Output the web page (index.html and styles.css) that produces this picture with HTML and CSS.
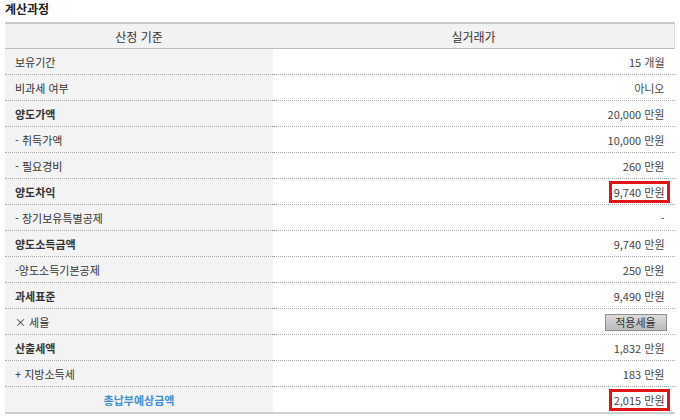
FILE: index.html
```html
<!DOCTYPE html>
<html lang="ko">
<head>
<meta charset="utf-8">
<link rel="stylesheet" href="styles.css">
</head>
<body>
<div class="title">계산과정</div>
<table class="calc">
  <thead>
    <tr><th class="col-l">산정 기준</th><th class="col-r">실거래가</th></tr>
  </thead>
  <tbody>
    <tr><td class="lbl">보유기간</td><td class="val">15 개월</td></tr>
    <tr><td class="lbl">비과세 여부</td><td class="val">아니오</td></tr>
    <tr><td class="lbl b">양도가액</td><td class="val">20,000 만원</td></tr>
    <tr><td class="lbl">- 취득가액</td><td class="val">10,000 만원</td></tr>
    <tr><td class="lbl">- 필요경비</td><td class="val">260 만원</td></tr>
    <tr><td class="lbl b">양도차익</td><td class="val"><span class="hl">9,740 만원</span></td></tr>
    <tr><td class="lbl">- 장기보유특별공제</td><td class="val">-</td></tr>
    <tr><td class="lbl b">양도소득금액</td><td class="val">9,740 만원</td></tr>
    <tr><td class="lbl">-양도소득기본공제</td><td class="val">250 만원</td></tr>
    <tr><td class="lbl b">과세표준</td><td class="val">9,490 만원</td></tr>
    <tr><td class="lbl">× 세율</td><td class="val"><button class="btn" type="button">적용세율</button></td></tr>
    <tr><td class="lbl b">산출세액</td><td class="val">1,832 만원</td></tr>
    <tr><td class="lbl">+ 지방소득세</td><td class="val">183 만원</td></tr>
    <tr class="last"><td class="lbl total">총납부예상금액</td><td class="val"><span class="hl">2,015 만원</span></td></tr>
  </tbody>
</table>
</body>
</html>
```

FILE: styles.css
```css
html, body {
  margin: 0;
  padding: 0;
  background: #ffffff;
}
body {
  padding: 0 5px;
  font-family: "Noto Sans CJK KR", "Noto Sans", sans-serif;
  font-size: 11px;
  color: #333333;
}
.title {
  height: 22px;
  line-height: 18px;
  font-size: 12px;
  font-weight: bold;
  color: #222222;
}
.calc {
  width: 670px;
  border-collapse: collapse;
  border-top: 2px solid #c9c9c9;
}
.calc th {
  height: 24px;
  padding: 0;
  background: #f2f2f2;
  border-bottom: 1px solid #bdbdbd;
  font-weight: normal;
  font-size: 12px;
  color: #333333;
  text-align: center;
}
.calc .col-l {
  width: 268px;
}
.calc .col-r {
  border-right: 1px solid #dddddd;
}
.calc td {
  height: 25px;
  padding: 0;
  border-bottom: 1px dotted #a8a8a8;
  line-height: 16px;
}
.calc .lbl {
  background: #f3f3f3;
  padding-left: 10px;
  color: #333333;
}
.calc .lbl.b {
  font-weight: bold;
}
.calc .val {
  text-align: right;
  padding-right: 10px;
  color: #444444;
}
.calc .last td {
  border-bottom: 2px solid #cfcfcf;
}
.calc .total {
  padding-left: 0;
  text-align: center;
  font-weight: bold;
  color: #3d8fd1;
}
.hl {
  display: inline-block;
  border: 3px solid #e01515;
  padding: 1px 2px;
  margin-right: -5px;
  line-height: 14px;
}
.btn {
  display: inline-block;
  width: 62px;
  height: 17px;
  padding: 0;
  margin-right: -2px;
  border: 1px solid #8e8e8e;
  background: linear-gradient(#dcdcdc, #b9b9b9);
  font-family: "Noto Sans CJK KR", sans-serif;
  font-size: 11px;
  line-height: 15px;
  color: #333333;
  vertical-align: middle;
}
```
